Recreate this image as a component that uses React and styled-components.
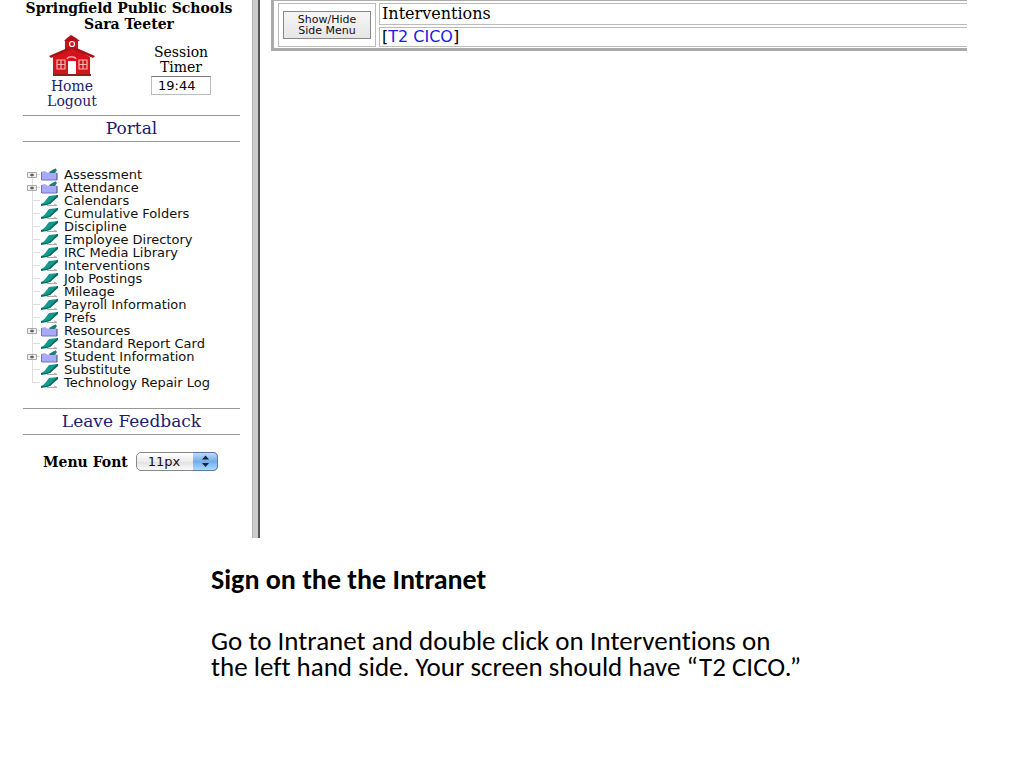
import React, { useState } from "react";
import styled, { createGlobalStyle } from "styled-components";

const GlobalStyle = createGlobalStyle`
  body {
    margin: 0;
    background: #fff;
    color: #000;
    font-family: "DejaVu Serif", "Liberation Serif", serif;
  }
  * {
    box-sizing: border-box;
  }
`

const Frames = styled.div`
  display: flex;
  min-height: 538px;
  margin-right: 57px;
`

const Side = styled.aside`
  flex: 0 0 252px;
  padding: 0 8px 0 23px;
`

const Splitter = styled.div`
  flex: 0 0 8px;
  background: #ccc;
  border-left: 1px solid #b4b4b4;
  border-right: 2px solid #555;
`

const Main = styled.main`
  flex: 1;
  min-width: 0;
  padding-left: 11px;
`

const School = styled.div`
  display: flex;
  flex-direction: column;
  align-items: center;
  width: 212px;
  font-size: 14px;
  line-height: 16px;
  font-weight: bold;
  white-space: nowrap;
`

const Account = styled.div`
  display: flex;
  justify-content: space-between;
  width: 188px;
  padding: 3px 0 6px;
`

const Links = styled.div`
  display: flex;
  flex-direction: column;
  align-items: center;
  width: 98px;
  font-size: 14px;
  line-height: 15px;
`

const Link = styled.a`
  color: #1c1c6e;
  text-decoration: none;
`

const Timer = styled.label`
  display: flex;
  flex-direction: column;
  align-items: center;
  padding-top: 10px;
  font-size: 14px;
  line-height: 15px;
  text-align: center;
`

const TimerInput = styled.input`
  width: 60px;
  height: 19px;
  margin-top: 1px;
  padding: 0 6px;
  border: 1px solid #bbb;
  border-top-color: #777;
  border-radius: 0;
  font-family: "DejaVu Sans", sans-serif;
  font-size: 13px;
`

const Banner = styled.div`
  width: 217px;
  height: 27px;
  border-top: 1px solid #999;
  border-bottom: 1px solid #999;
  font-size: 17px;
  line-height: 25px;
  text-align: center;
`

const Tree = styled.ul`
  margin: 26px 0 19px;
  padding: 0 0 0 4px;
  list-style: none;
  font-family: "DejaVu Sans", sans-serif;
  font-size: 13px;
  line-height: 13px;
`

const Item = styled.li`
  display: flex;
  align-items: center;
  height: 13px;
  white-space: nowrap;

  a {
    margin-left: 5px;
    color: #111;
    text-decoration: none;
  }
`

const FontPicker = styled.div`
  display: flex;
  align-items: center;
  gap: 8px;
  padding: 17px 0 0 20px;
  font-size: 14px;
  font-weight: bold;
`

const SelectBox = styled.span`
  position: relative;
  display: flex;

  svg {
    position: absolute;
    top: 0;
    right: 0;
    pointer-events: none;
  }
`

const Select = styled.select`
  appearance: none;
  width: 82px;
  height: 19px;
  padding: 0 11px;
  border: 1px solid #888;
  border-radius: 5px;
  background: linear-gradient(#fff, #ececec 50%, #e0e0e0 51%, #fafafa);
  color: #111;
  font-family: "DejaVu Sans", sans-serif;
  font-size: 13px;
`

const Header = styled.div`
  display: grid;
  grid-template-columns: 98px 1fr;
  grid-template-rows: 22px 20px;
  gap: 2px 3px;
  padding: 2px 0 1px 4px;
  border: 3px solid #aaa;
  border-top-width: 1px;
  border-right: 0;
`

const Cell = styled.div`
  display: flex;
  align-items: center;
  grid-row: ${props => (props.$tall ? "span 2" : "auto")};
  justify-content: ${props => (props.$tall ? "center" : "flex-start")};
  padding: 0 2px;
  border: 1px solid #bbb;
  border-right-width: ${props => (props.$tall ? "1px" : "0")};
  font-family: ${props => (props.$sans ? '"DejaVu Sans", sans-serif' : "inherit")};
  font-size: 16px;
  line-height: 18px;

  a {
    color: #1a1ae6;
    text-decoration: none;
  }
`

const Toggle = styled.button`
  width: 88px;
  height: 28px;
  padding: 0;
  border: 1px solid #888;
  border-radius: 0;
  background: linear-gradient(#f6f6f6, #e6e6e6);
  color: #111;
  font-family: "DejaVu Sans", sans-serif;
  font-size: 11px;
  line-height: 11px;
`

const Caption = styled.section`
  padding: 28px 24px 0 211px;
  font-family: Carlito, Calibri, Lato, sans-serif;
  font-size: 27px;
  font-variant-ligatures: none;
  line-height: 26px;

  h1 {
    margin: 0 0 34px;
    font-size: 28px;
    line-height: 28px;
  }
  p {
    margin: 0;
  }
  span {
    display: block;
  }
`

const items = [
  { name: "Assessment", folder: true },
  { name: "Attendance", folder: true },
  { name: "Calendars" },
  { name: "Cumulative Folders" },
  { name: "Discipline" },
  { name: "Employee Directory" },
  { name: "IRC Media Library" },
  { name: "Interventions" },
  { name: "Job Postings" },
  { name: "Mileage" },
  { name: "Payroll Information" },
  { name: "Prefs" },
  { name: "Resources", folder: true },
  { name: "Standard Report Card" },
  { name: "Student Information", folder: true },
  { name: "Substitute" },
  { name: "Technology Repair Log" },
];

const Schoolhouse = () => (
  <svg width="48" height="44" viewBox="0 0 48 44" aria-hidden="true">
    <path d="M17 18V6h13v12z" fill="#c9141a" />
    <path d="M16 6l3-3 4-3 5 3 4 3z" fill="#b01015" />
    <path d="M5 22L24 12l18 10v18H5z" fill="#d3151b" />
    <path d="M1 21L24 11l23 10-2 2-21-9L3 23z" fill="#aa1218" />
    <path d="M5 39h38v2H5z" fill="#8d2020" />
    <circle cx="24" cy="9" r="2.5" fill="#d3151b" stroke="#fff" strokeWidth="1.2" />
    <path d="M19 24c1-3 8-3 9 0" fill="none" stroke="#f3a9a9" strokeWidth="1.3" />
    <path d="M20 26h8v13h-8z" fill="#fff" />
    <path d="M9 25h8v9H9zM13 25v9M9 29.500h8M31 25h8v9h-8zM35 25v9M31 29.500h8" fill="none" stroke="#f6b5b5" strokeWidth="1.2" />
  </svg>
)

const TreeIcon = ({ folder, first, last }) => (
  <svg width="32" height="13" viewBox="0 0 32 13" aria-hidden="true">
    <path d={`M5.5 ${first ? 7 : 0}V${last ? 7 : 13}M6 6.5h7`} stroke="#dedede" fill="none" />
    {folder ? (
      <>
        <path d="M.5 4.500h9v5h-9z" fill="#eee" stroke="#aaa" />
        <path d="M3 7h4M5 5.500v3" stroke="#333" fill="none" />
        <path d="M14 4l4-1 2 1.500h10V12H15z" fill="#a9a9fa" />
        <path d="M14.500 4v8M15 12h15" stroke="#7373bd" fill="none" />
        <path d="M30 5v7" stroke="#454578" fill="none" />
        <path d="M22 4l5-3h1V0l2 2-2 3h-5z" fill="#1b7d73" />
      </>
    ) : (
      <>
        <path d="M20 11.500h10l-3-1.500" stroke="#b5a5a5" fill="none" />
        <path d="M14 10c3-1 5-4 8-8l9-1-8 9z" fill="#14998c" />
        <path d="M14 10h5l3-1 8-8h1v2l-8 7-3 1-6 1z" fill="#086b62" />
      </>
    )}
  </svg>
)

const Arrows = () => (
  <svg width="25" height="19" viewBox="0 0 25 19" aria-hidden="true">
    <defs>
      <linearGradient id="aqua" x1="0" y1="0" x2="0" y2="1">
        <stop offset="0" stopColor="#c5ddf7" />
        <stop offset=".5" stopColor="#72adea" />
        <stop offset="1" stopColor="#acdcff" />
      </linearGradient>
    </defs>
    <path d="M0 .5h20q4.500 0 4.500 5v8q0 5-4.500 5H0z" fill="url(#aqua)" />
    <path d="M0 .5h20q4.500 0 4.500 5v8q0 5-4.500 5H0" fill="none" stroke="#5878a8" />
    <path d="M9 7.500l3.500-4 3.500 4zM9 11h7l-3.500 4z" fill="#14243c" />
  </svg>
)

export default () => {
  const [size, setSize] = useState("11px");
  const [time, setTime] = useState("19:44");

  return (
    <>
      <GlobalStyle />
      <Frames>
        <Side>
          <School>
            <span>Springfield Public Schools</span>
            <span>Sara Teeter</span>
          </School>
          <Account>
            <Links>
              <Schoolhouse />
              <Link href="#home">Home</Link>
              <Link href="#logout">Logout</Link>
            </Links>
            <Timer>
              <span>
                Session
                <br />
                Timer
              </span>
              <TimerInput value={time} onChange={e => setTime(e.target.value)} />
            </Timer>
          </Account>
          <Banner>
            <Link href="#portal">Portal</Link>
          </Banner>
          <Tree>
            {items.map((item, i) => (
              <Item key={item.name}>
                <TreeIcon folder={item.folder} first={i === 0} last={i === items.length - 1} />
                <a href="#menu">{item.name}</a>
              </Item>
            ))}
          </Tree>
          <Banner>
            <Link href="#feedback">Leave Feedback</Link>
          </Banner>
          <FontPicker>
            <label htmlFor="menu-font">Menu Font</label>
            <SelectBox>
              <Select id="menu-font" value={size} onChange={e => setSize(e.target.value)}>
                <option>10px</option>
                <option>11px</option>
                <option>12px</option>
              </Select>
              <Arrows />
            </SelectBox>
          </FontPicker>
        </Side>
        <Splitter />
        <Main>
          <Header>
            <Cell $tall>
              <Toggle type="button">
                Show/Hide
                <br />
                Side Menu
              </Toggle>
            </Cell>
            <Cell>Interventions</Cell>
            <Cell $sans>
              [<a href="#t2-cico">T2 CICO</a>]
            </Cell>
          </Header>
        </Main>
      </Frames>
      <Caption>
        <h1>Sign on the the Intranet</h1>
        <p>
          <span>Go to Intranet and double click on Interventions on</span>
          <span>the left hand side. Your screen should have “T2 CICO.”</span>
        </p>
      </Caption>
    </>
  )
}
